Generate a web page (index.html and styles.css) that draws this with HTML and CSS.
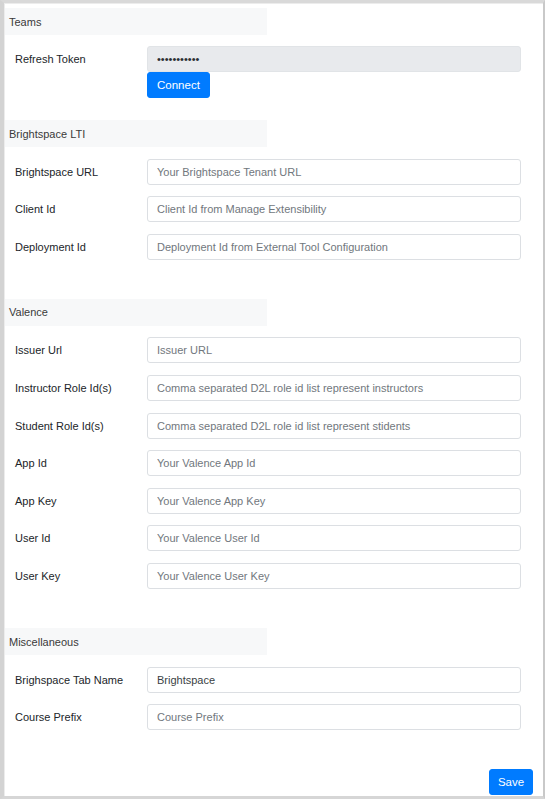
FILE: index.html
```html
<!DOCTYPE html>
<html lang="en">
<head>
<meta charset="utf-8">
<title>Settings</title>
<link rel="stylesheet" href="styles.css">
</head>
<body>
<div class="frame">
  <form class="settings">
    <section class="section section-teams">
      <h2 class="section-title">Teams</h2>
      <div class="rows">
        <div class="row">
          <label class="label">Refresh Token</label>
          <div class="control">
            <input class="input input-readonly" type="text" value="•••••••••••" readonly>
            <button type="button" class="btn">Connect</button>
          </div>
        </div>
      </div>
    </section>

    <section class="section">
      <h2 class="section-title">Brightspace LTI</h2>
      <div class="rows">
        <div class="row"><label class="label">Brightspace URL</label><input class="input" type="text" placeholder="Your Brightspace Tenant URL"></div>
        <div class="row"><label class="label">Client Id</label><input class="input" type="text" placeholder="Client Id from Manage Extensibility"></div>
        <div class="row"><label class="label">Deployment Id</label><input class="input" type="text" placeholder="Deployment Id from External Tool Configuration"></div>
      </div>
    </section>

    <section class="section">
      <h2 class="section-title">Valence</h2>
      <div class="rows">
        <div class="row"><label class="label">Issuer Url</label><input class="input" type="text" placeholder="Issuer URL"></div>
        <div class="row"><label class="label">Instructor Role Id(s)</label><input class="input" type="text" placeholder="Comma separated D2L role id list represent instructors"></div>
        <div class="row"><label class="label">Student Role Id(s)</label><input class="input" type="text" placeholder="Comma separated D2L role id list represent stidents"></div>
        <div class="row"><label class="label">App Id</label><input class="input" type="text" placeholder="Your Valence App Id"></div>
        <div class="row"><label class="label">App Key</label><input class="input" type="text" placeholder="Your Valence App Key"></div>
        <div class="row"><label class="label">User Id</label><input class="input" type="text" placeholder="Your Valence User Id"></div>
        <div class="row"><label class="label">User Key</label><input class="input" type="text" placeholder="Your Valence User Key"></div>
      </div>
    </section>

    <section class="section">
      <h2 class="section-title">Miscellaneous</h2>
      <div class="rows">
        <div class="row"><label class="label">Brighspace Tab Name</label><input class="input" type="text" value="Brightspace"></div>
        <div class="row"><label class="label">Course Prefix</label><input class="input" type="text" placeholder="Course Prefix"></div>
      </div>
    </section>

    <div class="actions">
      <button type="submit" class="btn">Save</button>
    </div>
  </form>
</div>
</body>
</html>
```

FILE: styles.css
```css
* { box-sizing: border-box; }

html, body {
  margin: 0;
  padding: 0;
  background: #ffffff;
}

body {
  font-family: "Liberation Sans", Arial, sans-serif;
  font-size: 11px;
  color: #212529;
}

.frame {
  width: 545px;
  height: 799px;
  border-top: 3px solid #d9d9d9;
  border-left: 4px solid #d3d3d3;
  border-right: 2px solid #c9c9c9;
  border-bottom: 3px solid #d6d6d6;
  box-shadow: inset 1px 1px 0 #ececec;
  padding: 5px 10px 0 1px;
  overflow: hidden;
}

.settings {
  display: flex;
  flex-direction: column;
}

.section {
  display: flex;
  flex-direction: column;
  gap: 11.5px;
  margin-bottom: 39px;
}

.section-teams {
  gap: 11px;
  margin-bottom: 22px;
}

.section-title {
  margin: 0;
  width: 262px;
  height: 27px;
  display: flex;
  align-items: center;
  padding-left: 4px;
  background: #f7f8f9;
  font-size: 11px;
  font-weight: normal;
  color: #3a3a3a;
}

.rows {
  display: flex;
  flex-direction: column;
  gap: 11.65px;
}

.row {
  display: flex;
  align-items: flex-start;
  padding-left: 10px;
}

.label {
  width: 132px;
  flex: none;
  line-height: 26px;
  color: #212529;
}

.control {
  display: flex;
  flex-direction: column;
  align-items: flex-start;
}

.input {
  width: 374px;
  height: 26px;
  padding: 0 9px;
  border: 1px solid #dcdfe3;
  border-radius: 3px;
  background: #ffffff;
  font-family: "Liberation Sans", Arial, sans-serif;
  font-size: 11px;
  color: #3a3f44;
  outline: none;
}

.input::placeholder {
  color: #71777d;
  opacity: 1;
}

.input-readonly {
  background: #e8eaed;
  border-color: #e1e4e7;
  color: #2b2f33;
  letter-spacing: 0;
}

.btn {
  height: 26px;
  padding: 0 9px;
  border: 1px solid #007bff;
  border-radius: 3px;
  background: #007bff;
  color: #ffffff;
  font-family: "Liberation Sans", Arial, sans-serif;
  font-size: 11.5px;
  cursor: pointer;
}

.actions {
  display: flex;
  justify-content: flex-end;
}

.actions .btn {
  width: 44px;
  padding: 0;
}
```
